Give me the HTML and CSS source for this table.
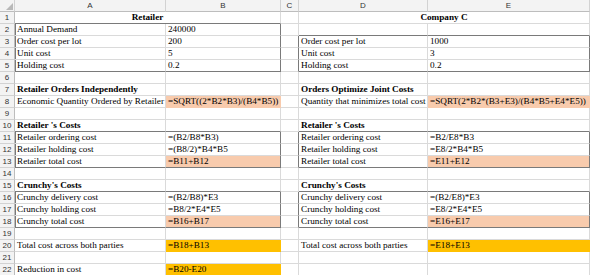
FILE: index.html
```html
<!DOCTYPE html>
<html>
<head>
<meta charset="utf-8">
<link rel="stylesheet" href="styles.css">
</head>
<body>
<div class="sheet">
  <div class="c h corner"><svg width="7" height="7" viewBox="0 0 7 7"><polygon points="7,0 7,7 0,7" fill="#b8b8b8"/></svg></div>
  <div class="c h">A</div>
  <div class="c h">B</div>
  <div class="c h">C</div>
  <div class="c h">D</div>
  <div class="c h">E</div>

  <div class="c rh">1</div>
  <div class="c ab b ctr bb">Retailer</div>
  <div class="c"></div>
  <div class="c de b ctr">Company C</div>

  <div class="c rh">2</div>
  <div class="c bl">Annual Demand</div>
  <div class="c br">240000</div>
  <div class="c"></div>
  <div class="c bb"></div>
  <div class="c bb"></div>

  <div class="c rh">3</div>
  <div class="c bl">Order cost per lot</div>
  <div class="c br">200</div>
  <div class="c br"></div>
  <div class="c">Order cost per lot</div>
  <div class="c br">1000</div>

  <div class="c rh">4</div>
  <div class="c bl">Unit cost</div>
  <div class="c br">5</div>
  <div class="c br"></div>
  <div class="c">Unit cost</div>
  <div class="c br">3</div>

  <div class="c rh">5</div>
  <div class="c bl bb">Holding cost</div>
  <div class="c br bb">0.2</div>
  <div class="c br"></div>
  <div class="c bb">Holding cost</div>
  <div class="c br bb">0.2</div>

  <div class="c rh">6</div>
  <div class="c"></div><div class="c"></div><div class="c"></div><div class="c"></div><div class="c"></div>

  <div class="c rh">7</div>
  <div class="c b">Retailer Orders Independently</div>
  <div class="c"></div>
  <div class="c"></div>
  <div class="c b">Orders Optimize Joint Costs</div>
  <div class="c"></div>

  <div class="c rh">8</div>
  <div class="c">Economic Quantity Ordered by Retailer</div>
  <div class="c peach">=SQRT((2*B2*B3)/(B4*B5))</div>
  <div class="c"></div>
  <div class="c">Quantity that minimizes total cost</div>
  <div class="c peach">=SQRT(2*B2*(B3+E3)/(B4*B5+E4*E5))</div>

  <div class="c rh">9</div>
  <div class="c"></div><div class="c"></div><div class="c"></div><div class="c"></div><div class="c"></div>

  <div class="c rh">10</div>
  <div class="c b bb">Retailer 's Costs</div>
  <div class="c bb"></div>
  <div class="c"></div>
  <div class="c b bb">Retailer 's Costs</div>
  <div class="c bb"></div>

  <div class="c rh">11</div>
  <div class="c bl">Retailer ordering cost</div>
  <div class="c br">=(B2/B8*B3)</div>
  <div class="c br"></div>
  <div class="c">Retailer ordering cost</div>
  <div class="c br">=B2/E8*B3</div>

  <div class="c rh">12</div>
  <div class="c bl">Retailer holding cost</div>
  <div class="c br">=(B8/2)*B4*B5</div>
  <div class="c br"></div>
  <div class="c">Retailer holding cost</div>
  <div class="c br">=E8/2*B4*B5</div>

  <div class="c rh">13</div>
  <div class="c bl bb">Retailer total cost</div>
  <div class="c peach br bb">=B11+B12</div>
  <div class="c br"></div>
  <div class="c bb">Retailer total cost</div>
  <div class="c peach br bb">=E11+E12</div>

  <div class="c rh">14</div>
  <div class="c"></div><div class="c"></div><div class="c"></div><div class="c"></div><div class="c"></div>

  <div class="c rh">15</div>
  <div class="c b bb">Crunchy's Costs</div>
  <div class="c bb"></div>
  <div class="c"></div>
  <div class="c b bb">Crunchy's Costs</div>
  <div class="c bb"></div>

  <div class="c rh">16</div>
  <div class="c bl">Crunchy delivery cost</div>
  <div class="c br">=(B2/B8)*E3</div>
  <div class="c br"></div>
  <div class="c">Crunchy delivery cost</div>
  <div class="c br">=(B2/E8)*E3</div>

  <div class="c rh">17</div>
  <div class="c bl">Crunchy holding cost</div>
  <div class="c br">=B8/2*E4*E5</div>
  <div class="c br"></div>
  <div class="c">Crunchy holding cost</div>
  <div class="c br">=E8/2*E4*E5</div>

  <div class="c rh">18</div>
  <div class="c bl bb">Crunchy total cost</div>
  <div class="c peach br bb">=B16+B17</div>
  <div class="c br"></div>
  <div class="c bb">Crunchy total cost</div>
  <div class="c peach br bb">=E16+E17</div>

  <div class="c rh">19</div>
  <div class="c"></div><div class="c"></div><div class="c"></div><div class="c"></div><div class="c"></div>

  <div class="c rh">20</div>
  <div class="c">Total cost across both parties</div>
  <div class="c gold">=B18+B13</div>
  <div class="c"></div>
  <div class="c">Total cost across both parties</div>
  <div class="c gold">=E18+E13</div>

  <div class="c rh">21</div>
  <div class="c"></div><div class="c"></div><div class="c"></div><div class="c"></div><div class="c"></div>

  <div class="c rh">22</div>
  <div class="c">Reduction in cost</div>
  <div class="c gold">=B20-E20</div>
  <div class="c"></div>
  <div class="c"></div>
  <div class="c"></div>
</div>
</body>
</html>
```

FILE: styles.css
```css
html, body {
  margin: 0;
  padding: 0;
  background: #ffffff;
}

.sheet {
  display: grid;
  grid-template-columns: 15px 151px 115px 18px 129px 162px;
  grid-auto-rows: 12px;
  font-family: "Liberation Serif", "Times New Roman", serif;
  font-size: 9.2px;
  color: #000000;
  overflow: hidden;
}

.c {
  box-sizing: border-box;
  border-right: 1px solid #dadada;
  border-bottom: 1px solid #dadada;
  padding: 0 2px;
  line-height: 11px;
  white-space: nowrap;
  overflow: visible;
}

.h {
  background: #f3f3f3;
  border-right-color: #d2d2d2;
  border-bottom-color: #bdbdbd;
  font-family: "Liberation Sans", Arial, sans-serif;
  font-size: 8px;
  color: #333333;
  text-align: center;
  padding: 0;
}

.corner {
  display: flex;
  align-items: flex-end;
  justify-content: flex-end;
  padding: 0 1px 1px 0;
}

.corner svg {
  display: block;
}

.rh {
  background: #f3f3f3;
  border-right-color: #bdbdbd;
  border-bottom-color: #d2d2d2;
  font-family: "Liberation Sans", Arial, sans-serif;
  font-size: 8px;
  color: #333333;
  text-align: center;
  padding: 0;
}

.ab { grid-column: span 2; }
.de { grid-column: span 2; }

.b { font-weight: bold; }
.ctr { text-align: center; }

.peach {
  background: #f8cbad;
  border-right-color: #f8cbad;
  border-bottom-color: #f8cbad;
}

.gold {
  background: #ffc000;
  border-right-color: #ffc000;
  border-bottom-color: #ffc000;
}

.bb { border-bottom-color: #7a7a7a; }
.br { border-right-color: #7a7a7a; }
.bl { box-shadow: inset 1px 0 0 #7a7a7a; }
```
